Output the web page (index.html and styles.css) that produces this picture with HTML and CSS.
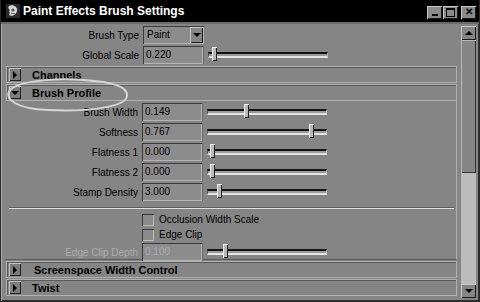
FILE: index.html
```html
<!DOCTYPE html>
<html lang="en">
<head>
    <meta charset="UTF-8">
    <title>Paint Effects Brush Settings</title>
    <link rel="stylesheet" href="styles.css">
</head>
<body>
    <div class="window">
        <div class="titlebar">
            <svg class="app-icon" width="14" height="14" viewBox="0 0 14 14">
                <rect x="0" y="0" width="14" height="14" fill="#2a2a2a"/>
                <path d="M3 2 C7 0 12 3 11 7 C10 11 6 13 3 11 C5 9 2 7 4 6 C2 5 2 3 3 2 Z" fill="#d8d8d8"/>
                <circle cx="7" cy="6" r="1.6" fill="#555"/>
                <path d="M5 9 L9 10" stroke="#555" stroke-width="1"/>
            </svg>
            <span class="title">Paint Effects Brush Settings</span>
            <div class="win-buttons">
                <span class="win-btn"><i class="ic-min"></i></span>
                <span class="win-btn"><i class="ic-max"></i></span>
                <span class="win-btn ic-close">✕</span>
            </div>
        </div>

        <div class="client">
            <div class="panel">
                <div class="row">
                    <span class="label">Brush Type</span>
                    <div class="dropdown">
                        <span class="dd-text">Paint</span>
                        <span class="dd-btn"><i class="tri-down"></i></span>
                    </div>
                </div>
                <div class="row">
                    <span class="label">Global Scale</span>
                    <span class="field">0.220</span>
                    <div class="slider"><span class="thumb" style="left:3px"></span></div>
                </div>

                <div class="section closed">
                    <span class="sec-btn"><i class="tri-right"></i></span>
                    <span class="sec-title">Channels</span>
                </div>

                <div class="group">
                    <div class="section open">
                        <span class="sec-btn"><i class="tri-down"></i></span>
                        <span class="sec-title">Brush Profile</span>
                    </div>
                    <div class="row">
                        <span class="label">Brush Width</span>
                        <span class="field">0.149</span>
                        <div class="slider"><span class="thumb" style="left:36px"></span></div>
                    </div>
                    <div class="row">
                        <span class="label">Softness</span>
                        <span class="field">0.767</span>
                        <div class="slider"><span class="thumb" style="left:101px"></span></div>
                    </div>
                    <div class="row">
                        <span class="label">Flatness 1</span>
                        <span class="field">0.000</span>
                        <div class="slider"><span class="thumb" style="left:2px"></span></div>
                    </div>
                    <div class="row">
                        <span class="label">Flatness 2</span>
                        <span class="field">0.000</span>
                        <div class="slider"><span class="thumb" style="left:2px"></span></div>
                    </div>
                    <div class="row">
                        <span class="label">Stamp Density</span>
                        <span class="field">3.000</span>
                        <div class="slider"><span class="thumb" style="left:9px"></span></div>
                    </div>

                    <div class="separator"></div>

                    <div class="check-row">
                        <span class="checkbox"></span>
                        <span class="check-label">Occlusion Width Scale</span>
                    </div>
                    <div class="check-row">
                        <span class="checkbox"></span>
                        <span class="check-label">Edge Clip</span>
                    </div>
                    <div class="row disabled">
                        <span class="label">Edge Clip Depth</span>
                        <span class="field">0.100</span>
                        <div class="slider"><span class="thumb" style="left:15px"></span></div>
                    </div>
                </div>

                <div class="section closed">
                    <span class="sec-btn"><i class="tri-right"></i></span>
                    <span class="sec-title wide">Screenspace Width Control</span>
                </div>
                <div class="section closed">
                    <span class="sec-btn"><i class="tri-right"></i></span>
                    <span class="sec-title">Twist</span>
                </div>

                <!-- hand drawn note around the open section -->
                <svg class="note" width="140" height="40" viewBox="0 0 140 40">
                    <path d="M90 5 C60 1 18 4 7 13 C-2 22 12 33 44 34 C84 36 122 31 123 20 C124 11 110 6 80 4"
                          fill="none" stroke="#d4d4d4" stroke-width="2"/>
                </svg>
            </div>

            <div class="scrollbar">
                <span class="sb-btn"><i class="tri-up"></i></span>
                <span class="sb-thumb"></span>
                <span class="sb-track"></span>
                <span class="sb-btn"><i class="tri-down"></i></span>
            </div>
        </div>
    </div>
</body>
</html>
```

FILE: styles.css
```css
:root {
    --face: #858585;
    --light: #c8c8c8;
    --shadow: #4a4a4a;
    --dark: #1a1a1a;
}

body {
    margin: 0;
    background: #000;
    font-family: 'Liberation Sans', Arial, sans-serif;
    font-size: 10px;
    color: #000;
}

.window {
    width: 480px;
    height: 302px;
    box-sizing: border-box;
    background: var(--face);
    border: 1px solid #2a2a2a;
    border-top: 0;
    box-shadow: inset 1px 0 #a8a8a8, inset -1px -1px #303030;
    display: flex;
    flex-direction: column;
    overflow: hidden;
}

/* title bar */
.titlebar {
    height: 22px;
    background: #000;
    display: flex;
    align-items: center;
    padding: 0 3px 0 5px;
    flex-shrink: 0;
}

.app-icon {
    margin-right: 3px;
}

.title {
    color: #fff;
    font-weight: bold;
    font-size: 12px;
}

.win-buttons {
    margin-left: auto;
    display: flex;
    gap: 1px;
    margin-top: 2px;
}

.win-btn {
    width: 15px;
    height: 13px;
    background: #8a8a8a;
    box-shadow: inset 1px 1px var(--light), inset -1px -1px var(--dark);
    display: flex;
    align-items: center;
    justify-content: center;
    font-size: 10px;
    font-weight: bold;
    line-height: 1;
}

.win-btn:nth-child(2) {
    margin-right: 2px;
}

.ic-min {
    width: 6px;
    height: 2px;
    background: #000;
    margin-top: 6px;
}

.ic-max {
    width: 7px;
    height: 6px;
    border: 1px solid #000;
    border-top-width: 2px;
}

/* client area */
.client {
    flex: 1;
    display: flex;
    padding: 0 3px 3px 3px;
    border-top: 2px solid #6a6a6a;
}

.panel {
    flex: 1;
    position: relative;
    padding: 1px 2px 0 1px;
}

.row {
    display: grid;
    grid-template-columns: 134px 61px 120px;
    column-gap: 4px;
    align-items: center;
    height: 20px;
}

.label {
    text-align: right;
    white-space: nowrap;
}

.field {
    height: 18px;
    box-sizing: border-box;
    padding: 3px 0 0 3px;
    background: #8c8c8c;
    box-shadow: inset 1px 1px #3c3c3c, inset -1px -1px #b4b4b4;
    border-right: 1px solid #6a6a6a;
}

.disabled .label,
.disabled .field {
    color: #adadad;
}

.dropdown {
    height: 18px;
    display: flex;
    box-sizing: border-box;
    background: #8c8c8c;
    box-shadow: inset 1px 1px #3c3c3c, inset -1px -1px #b4b4b4;
    padding: 1px;
}

.dd-text {
    flex: 1;
    padding: 2px 0 0 3px;
}

.dd-btn {
    width: 13px;
    background: var(--face);
    box-shadow: inset 1px 1px var(--light), inset -1px -1px var(--dark);
    display: flex;
    align-items: center;
    justify-content: center;
}

/* sliders */
.slider {
    position: relative;
    height: 6px;
    box-sizing: border-box;
    border-top: 2px solid #111;
    border-left: 1px solid #555;
    border-right: 1px solid #bbb;
    border-bottom: 2px solid #e4e4e4;
    background: #9a9a9a;
}

.thumb {
    position: absolute;
    top: -7px;
    width: 5px;
    height: 14px;
    background: #b8b8b8;
    box-shadow: inset 1px 1px #eee, inset -1px -1px #222;
}

/* collapsible frames */
.section {
    height: 17px;
    margin: 1px 0 1px 1px;
    width: 451px;
    box-sizing: border-box;
    display: flex;
    align-items: center;
    border: 1px solid #b0b0b0;
    box-shadow: inset 1px 1px #5a5a5a;
    padding-left: 2px;
}

.sec-btn {
    width: 12px;
    height: 13px;
    background: #7c7c7c;
    box-shadow: inset 1px 1px #c0c0c0, inset -1px -1px #222;
    display: flex;
    align-items: center;
    justify-content: center;
}

.sec-title {
    font-weight: bold;
    font-size: 11px;
    margin-left: 11px;
}

.sec-title.wide {
    margin-left: 13px;
}

.group {
    width: 452px;
    box-sizing: border-box;
    border-right: 1px solid #b0b0b0;
    border-bottom: 1px solid #5a5a5a;
    height: 176px;
}

.group .section {
    border-right: 0;
    width: 450px;
}

.group .row {
    margin-left: -1px;
}

.separator {
    height: 0;
    margin: 5px 2px 3px 4px;
    border-top: 1px solid #5c5c5c;
    border-bottom: 1px solid #e0e0e0;
}

.check-row {
    height: 15px;
    display: flex;
    align-items: center;
    padding-left: 137px;
}

.checkbox {
    width: 12px;
    height: 12px;
    box-sizing: border-box;
    background: #8a8a8a;
    box-shadow: inset 1px 1px #3a3a3a, inset -1px -1px #bcbcbc;
}

.check-label {
    margin-left: 5px;
}

/* triangles */
.tri-right {
    width: 0;
    height: 0;
    border-top: 4px solid transparent;
    border-bottom: 4px solid transparent;
    border-left: 4px solid #000;
}

.tri-down {
    width: 0;
    height: 0;
    border-left: 4px solid transparent;
    border-right: 4px solid transparent;
    border-top: 4px solid #000;
}

.tri-up {
    width: 0;
    height: 0;
    border-left: 4px solid transparent;
    border-right: 4px solid transparent;
    border-bottom: 4px solid #000;
}

/* scrollbar */
.scrollbar {
    width: 15px;
    display: flex;
    flex-direction: column;
    margin-top: 2px;
}

.sb-btn {
    height: 14px;
    background: var(--face);
    box-shadow: inset 1px 1px var(--light), inset -1px -1px var(--dark);
    display: flex;
    align-items: center;
    justify-content: center;
}

.sb-thumb {
    height: 133px;
    background: var(--face);
    box-shadow: inset 1px 1px #b8b8b8, inset -1px -1px #333;
}

.sb-track {
    flex: 1;
    background: #bcbcbc;
}

.note {
    position: absolute;
    left: 0;
    top: 52px;
}
```
